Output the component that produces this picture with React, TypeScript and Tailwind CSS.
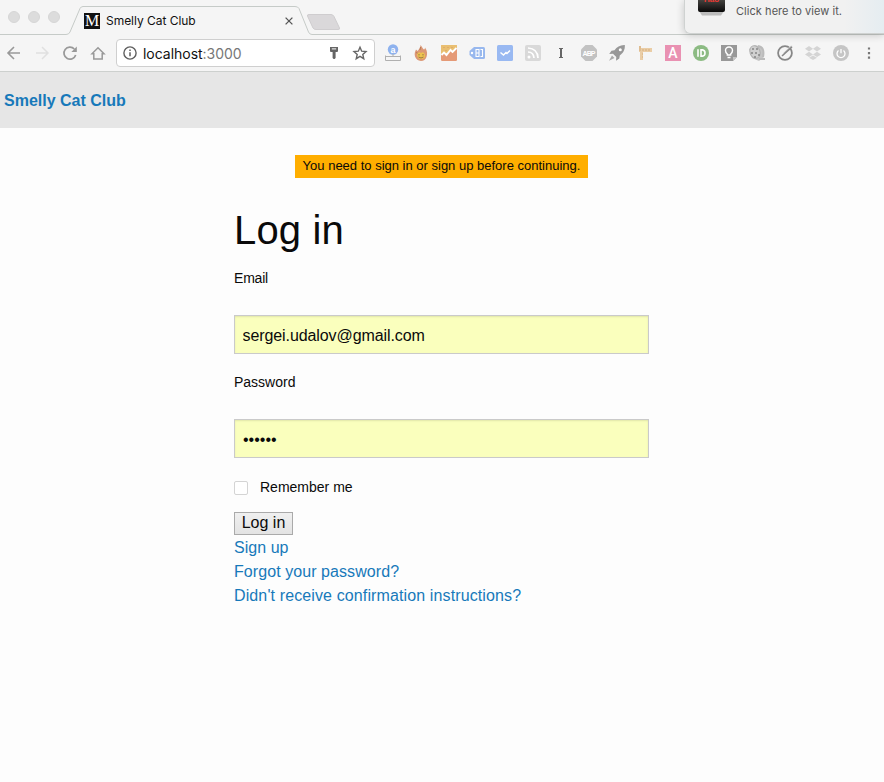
import React from "react";

type IconProps = { children: React.ReactNode };

function Slot({ children }: IconProps) {
  return (
    <div className="flex w-7 shrink-0 items-center justify-center">
      <svg width="20" height="20" viewBox="0 0 20 20" fill="none">
        {children}
      </svg>
    </div>
  );
}

function TabStrip() {
  return (
    <div className="relative flex h-[35px] items-center font-[Inter,'Liberation_Sans',sans-serif]">
      <svg className="absolute inset-0" width="884" height="35" viewBox="0 0 884 35" fill="none">
        <path d="M0 34.5H66Q69 34.5 70 32L80 8.500Q81 6.500 83 6.500H295Q298 6.500 299 8.500L308.500 32Q309.500 34.500 312 34.500H884" stroke="#c6cbc8" />
        <path d="M309 14.500H331Q333 14.500 334 16.500L339.500 28Q340 29.500 338 29.500H316Q314 29.500 313 28L307.500 16Q307 14.500 309 14.500Z" fill="#dad8da" stroke="#cfcdcf" />
      </svg>
      <div className="relative flex h-[35px] w-[84px] gap-[8px] pl-2 pt-[11px]">
        <span className="h-3 w-3 rounded-full border border-[#d6d6d6] bg-[#dcdcdc]" />
        <span className="h-3 w-3 rounded-full border border-[#d6d6d6] bg-[#dcdcdc]" />
        <span className="h-3 w-3 rounded-full border border-[#d6d6d6] bg-[#dcdcdc]" />
      </div>
      <div className="relative mt-[7px] flex h-4 w-4 items-center justify-center bg-[#111] font-['Liberation_Serif',serif] text-[16px] leading-4 text-white">M</div>
      <span className="relative ml-1.5 mt-[6px] w-[177px] whitespace-nowrap text-[12px] leading-4 tracking-[-0.03px] text-[#111]">Smelly Cat Club</span>
      <svg className="relative mt-[6px]" width="12" height="12" viewBox="0 0 12 12">
        <path d="M2.600 2.600L9.400 9.400M9.400 2.600L2.600 9.400" stroke="#555" strokeWidth="1.300" />
      </svg>
    </div>
  );
}

function Toolbar() {
  return (
    <div className="flex h-[36px] items-center font-[Inter,'Liberation_Sans',sans-serif]">
      <Slot><path d="M16 10H4.500M10 4L4 10L10 16" stroke="#999" strokeWidth="1.600" /></Slot>
      <Slot><path d="M4 10H15.500M10 4L16 10L10 16" stroke="#e0e0e0" strokeWidth="1.500" /></Slot>
      <Slot>
        <path d="M14.300 6A6 6 0 1 0 15.700 12" stroke="#999" strokeWidth="1.700" />
        <path d="M16.800 3.500V9H11.300Z" fill="#999" />
      </Slot>
      <Slot><path d="M4 10.700L10 4.700L16 10.700H14.200V16H5.800V10.700Z" stroke="#999" strokeWidth="1.500" /></Slot>
      <div className="ml-1 flex h-[28px] w-[259px] items-center rounded-[4px] border border-[#cfcfcf] bg-white pl-[6px] pr-[6px]">
        <svg width="14" height="14" viewBox="0 0 14 14" fill="none">
          <circle cx="7" cy="7" r="6.100" stroke="#5e5e5e" strokeWidth="1.400" />
          <path d="M7 6.200V10.300M7 3.500V5" stroke="#5e5e5e" strokeWidth="1.500" />
        </svg>
        <span className="ml-[6px] mt-px whitespace-nowrap text-[14px] leading-5 tracking-[-0.03px] text-[#111]">
          localhost<span className="text-[#777]">:3000</span>
        </span>
        <svg className="ml-auto" width="16" height="16" viewBox="0 0 16 16">
          <path d="M4 2H12V6Q12 7 11 7H9.600V13L8.600 14H7.600L6.600 13V7H5Q4 7 4 6Z" fill="#656565" />
          <path d="M5.800 3.900H10.200" stroke="#fff" strokeWidth="1" />
        </svg>
        <svg className="ml-[10px]" width="16" height="16" viewBox="0 0 16 16" fill="none">
          <path d="M8 2.300L9.700 6.200L14 6.600L10.800 9.400L11.750 13.700L8 11.400L4.250 13.700L5.200 9.400L2 6.600L6.300 6.200Z" stroke="#666" strokeWidth="1.400" />
        </svg>
      </div>
      <div className="ml-1 flex">
        <Slot>
          <circle cx="10" cy="6.500" r="5.200" fill="#8eb2ee" />
          <text x="10" y="9.500" textAnchor="middle" fontSize="9" fontWeight="700" fontFamily="Liberation Sans" fill="#fff">a</text>
          <path d="M10 11V13M2.500 12.500V17.500H17.500V12.500M2.500 13.500H17.500" stroke="#b0b0b0" />
        </Slot>
        <Slot>
          <path d="M9.500 2C11.500 4 11.500 6 13 6.500C14 6 14 5 14 4.500C16.500 8 16.500 11 15.500 14Q14 18 10 18Q5.500 17.500 4 13.500C3 10 4.500 8 5 6.500L6.500 8C8 6 9.500 5 9.500 2Z" fill="#dc9876" />
          <path d="M9.500 4L9 7M5.500 9L6.500 11" stroke="#b67854" />
          <path d="M6 11Q8 8 10 10Q13 8 14 12Q14.500 16 10 16Q6 16 6 11Z" fill="#edc34f" />
          <path d="M8 11V12.500M12 11V12.500M7.500 14Q10 16 12.500 14" stroke="#9a7449" strokeWidth="1" />
        </Slot>
        <Slot>
          <rect x="2" y="2" width="16" height="16" rx="1.200" fill="#e59a77" />
          <path d="M3 2H17Q18 2 18 3V5L14 10L11 7L7 11L5 9L2 12V3Q2 2 3 2Z" fill="#e9bf71" />
          <path d="M2.500 12L5 9.500L7.500 12L11.500 7L13.500 9L17.500 5" stroke="#fff" strokeWidth="1.900" />
          <path d="M5 4V5M9 4V5M13 4V5M7 7V8" stroke="#d79b62" />
        </Slot>
        <Slot>
          <path d="M7 4H16.500Q18 4 18 5.500V14.500Q18 16 16.500 16H7L2.500 12V8Z" fill="#98b8ee" />
          <circle cx="5" cy="10" r="1.200" fill="#fff" />
          <path d="M9 6.500H12V13.500H9ZM13.500 6.500H15.500V13.500H13.500M9 10H12" stroke="#fff" strokeWidth="1.100" />
        </Slot>
        <Slot>
          <rect x="2" y="2" width="16" height="16" rx="1.500" fill="#99b9f2" />
          <path d="M5.500 9.500L8.500 12L11 9.500L12 10.500L15 7.500" stroke="#fff" strokeWidth="1.500" />
        </Slot>
        <Slot>
          <rect x="2" y="2" width="16" height="16" rx="2" fill="#d9d9d9" />
          <circle cx="6" cy="14" r="1.500" fill="#fff" />
          <path d="M5 9Q10.500 9 11 15M5 5Q14.500 5.500 15 15" stroke="#fff" strokeWidth="1.700" />
        </Slot>
        <Slot><path d="M8 5.500H12M8 14.500H12M10 5.500V15" stroke="#666" strokeWidth="1.200" /><path d="M10 5.500V14.500" stroke="#666" strokeWidth="2" /></Slot>
        <Slot>
          <path d="M6.500 2H13.500L18 6.500V13.500L13.500 18H6.500L2 13.500V6.500Z" fill="#c2c2c2" />
          <text x="10" y="12.700" textAnchor="middle" textLength="13" fontSize="7" fontWeight="700" fontFamily="Liberation Sans" fill="#fff">ABP</text>
        </Slot>
        <Slot>
          <path d="M17.800 2C13 1.800 10 4 7.500 7.200L4.500 7.700L2.200 11L6 10.700L9.300 14L9 17.800L12.300 15.500L12.800 12.500C16 10 18.200 7 17.800 2Z" fill="#989898" />
          <path d="M5 12.500L2 17.800L7.500 15Z" fill="#aaa" />
          <circle cx="13.300" cy="6.700" r="1.500" fill="#fff" />
        </Slot>
        <Slot>
          <path d="M4 3H6V5H17V9H8V17H5V9H4Z" fill="#eacda6" />
          <path d="M5 3V8M8 6V8M11 6V8M14 6V8M7 11H8M7 14H8" stroke="#d5ad7c" />
        </Slot>
        <Slot>
          <rect x="2" y="2" width="16" height="16" fill="#e991b2" />
          <text x="10" y="15" textAnchor="middle" fontSize="14" fontWeight="500" fontFamily="Roboto" fill="#fff">A</text>
        </Slot>
        <Slot>
          <circle cx="10" cy="10" r="8" fill="#8cbb83" />
          <path d="M7 6.200V13.800M10 6.900H11.500Q14 7.200 14 10Q14 13 11.500 13.100H10Z" stroke="#fff" strokeWidth="1.600" />
        </Slot>
        <Slot>
          <path d="M2 2H18V14L14 18H2Z" fill="#989898" />
          <path d="M14 18V14H18Z" fill="#c5c5c5" />
          <path d="M8.300 12V11Q6.500 9.500 6.500 7.500A3.500 3.500 0 0 1 13.500 7.500Q13.500 9.500 11.700 11V12ZM8.500 14.500H11.500" stroke="#fff" strokeWidth="1.400" />
        </Slot>
        <Slot>
          <path d="M2 6L8 2L15 4L17 14L12 18L5 15Z" fill="#c5c5c5" />
          <ellipse cx="8" cy="9" rx="5" ry="6.500" transform="rotate(-20 8 9)" fill="#d0d0d0" stroke="#b0b0b0" />
          <path d="M11 3Q18 4 16 14" stroke="#bbb" strokeWidth="2" />
          <path d="M6 5V7M10 5V7M5 9V11M9 9V11M8 13V15M12 11V13" stroke="#858585" strokeWidth="1.500" />
          <path d="M12 16L18 16" stroke="#bbb" strokeWidth="2" />
        </Slot>
        <Slot>
          <circle cx="10" cy="10" r="6.900" stroke="#878787" strokeWidth="1.800" />
          <path d="M17.500 3L10 10.500L6.500 13.500L9 9.500L16 2.700Z" fill="#878787" stroke="#f5f5f5" strokeWidth=".7" />
          <path d="M7 13L17 4" stroke="#878787" strokeWidth="1.500" />
        </Slot>
        <Slot>
          <path d="M6 3L10 5.800L6 8.500L2 5.800ZM14 3L18 5.800L14 8.500L10 5.800ZM6 8.700L10 11.500L6 14L2 11.500ZM14 8.700L18 11.500L14 14L10 11.500ZM6 14.700L10 12.500L14 14.700L10 17Z" fill="#d4d4d4" />
        </Slot>
        <Slot>
          <circle cx="10" cy="10" r="8" fill="#c5c5c5" />
          <path d="M10 6V10.200M7.500 7.500A4 4 0 1 0 12.500 7.500" stroke="#fff" strokeWidth="1.300" />
        </Slot>
        <Slot><path d="M8.900 4.400H11.100V6.600H8.900ZM8.900 9H11.100V11.200H8.900ZM8.900 13.600H11.100V15.800H8.900Z" fill="#777" /></Slot>
      </div>
    </div>
  );
}

function Notice() {
  return (
    <div className="absolute right-0 top-0 flex h-[34px] w-[200px] overflow-visible rounded-bl-[6px] border-b border-l border-[#cfd2d1] bg-gradient-to-r from-[#f1f1f1] from-80% to-[#e5edf1] shadow-[0_1px_9px_rgba(0,0,0,0.2)]">
      <div className="ml-[13px] h-[14px] w-[27px] shrink-0">
        <svg width="27" height="17" viewBox="0 0 27 17">
          <defs>
            <linearGradient id="appicon" x1="0" y1="0" x2="0" y2="1">
              <stop stopColor="#44423f" />
              <stop offset="1" stopColor="#080808" />
            </linearGradient>
          </defs>
          <path d="M1 11H26L23 15.500H4Z" fill="#bbb" />
          <path d="M0 0H27V10Q27 12 25 12H2Q0 12 0 10Z" fill="url(#appicon)" />
          <text x="13.500" y="2" textAnchor="middle" fontSize="8" fontWeight="700" fontFamily="Liberation Sans" fill="#f03832">Hao</text>
        </svg>
      </div>
      <span className="ml-[11px] mt-[3px] whitespace-nowrap font-[Inter,'Liberation_Sans',sans-serif] text-[11px] leading-4 tracking-[0.05px] text-[#555]">Click here to view it.</span>
    </div>
  );
}

function LoginForm() {
  return (
    <form className="ml-[234px] w-[415px]" onSubmit={(event) => event.preventDefault()}>
      <h1 className="mt-[24px] h-[56px] text-[40px] leading-[56px] tracking-[0.15px] text-[#0a0a0a]">Log in</h1>
      <label htmlFor="email" className="mt-[8px] block text-[14px] leading-[25px] tracking-[-0.2px]">Email</label>
      <input id="email" type="email" defaultValue="sergei.udalov@gmail.com" className="mt-[24px] block h-[39px] w-full border border-[#cacaca] bg-[#faffbd] px-[7.5px] pt-[2px] text-[16px] tracking-[-0.09px] shadow-[inset_0_1px_2px_rgba(10,10,10,0.1)] outline-none" />
      <label htmlFor="password" className="mt-[16px] block text-[14px] leading-[25px]">Password</label>
      <input id="password" type="password" defaultValue="secret" className="mt-[24px] block h-[39px] w-full border border-[#cacaca] bg-[#faffbd] px-2 pt-[2px] text-[16px] shadow-[inset_0_1px_2px_rgba(10,10,10,0.1)] outline-none" />
      <label className="mt-[17px] flex h-[25px] items-center text-[14px] leading-[25px]">
        <input type="checkbox" className="mr-[12px] h-[14px] w-[14px] appearance-none rounded-[2px] border border-[#d4d4d4] bg-white" />
        Remember me
      </label>
      <button className="mt-[12px] block h-[23px] w-[59px] border border-[#aaa] bg-gradient-to-b from-[#f0f0f0] to-[#e3e3e3] pb-[2px] text-[16px] leading-[19px]">Log in</button>
      <nav className="mt-px flex flex-col items-start text-[16px] leading-6 text-[#1779ba]">
        <a href="#" className="tracking-[0.04px]">Sign up</a>
        <a href="#" className="tracking-[0.07px]">Forgot your password?</a>
        <a href="#" className="tracking-[0.12px]">Didn't receive confirmation instructions?</a>
      </nav>
    </form>
  );
}

export default function App() {
  return (
    <div className="relative h-[782px] w-[884px] overflow-hidden bg-[#fdfdfd] font-['Liberation_Sans',Arial,sans-serif] text-[#0a0a0a]">
      <div className="h-[72px] border-b border-[#cdd0ce] bg-[#f5f5f5]">
        <TabStrip />
        <Toolbar />
      </div>
      <Notice />
      <header className="flex h-[56px] items-center bg-[#e6e6e6] pl-1 pt-[2px] text-[16px] font-bold text-[#1779ba]">Smelly Cat Club</header>
      <main>
        <div className="ml-[295px] mt-[27px] h-[23px] w-[293px] whitespace-nowrap bg-[#ffae00] text-center text-[13px] leading-[22px]">You need to sign in or sign up before continuing.</div>
        <LoginForm />
      </main>
    </div>
  );
}
